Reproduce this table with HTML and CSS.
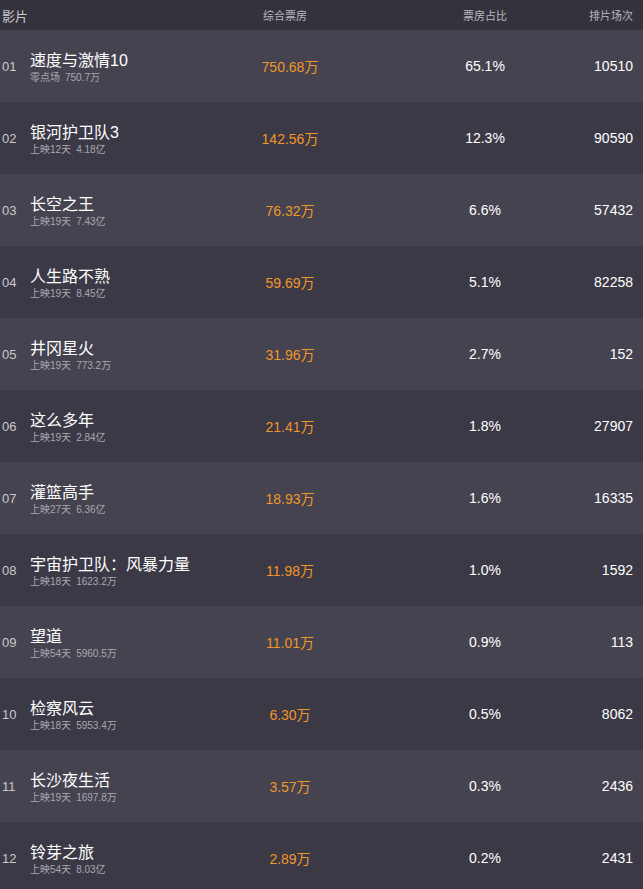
FILE: index.html
```html
<!DOCTYPE html>
<html lang="zh-CN">
<head>
    <meta charset="UTF-8">
    <meta name="viewport" content="width=device-width, initial-scale=1.0">
    <title>实时票房</title>
    <link rel="stylesheet" href="styles.css">
</head>
<body>

    <div class="board">
        <!-- Table header -->
        <div class="row head">
            <div class="rank">影片</div>
            <div></div>
            <div class="box">综合票房</div>
            <div></div>
            <div class="rate">票房占比</div>
            <div class="shows">排片场次</div>
        </div>

        <!-- Movie rows -->
        <div class="row">
            <div class="rank">01</div>
            <div class="movie"><p class="name">速度与激情10</p><p class="info">零点场<span>750.7万</span></p></div>
            <div class="box">750.68万</div><div></div>
            <div class="rate">65.1%</div>
            <div class="shows">10510</div>
        </div>
        <div class="row">
            <div class="rank">02</div>
            <div class="movie"><p class="name">银河护卫队3</p><p class="info">上映12天<span>4.18亿</span></p></div>
            <div class="box">142.56万</div><div></div>
            <div class="rate">12.3%</div>
            <div class="shows">90590</div>
        </div>
        <div class="row">
            <div class="rank">03</div>
            <div class="movie"><p class="name">长空之王</p><p class="info">上映19天<span>7.43亿</span></p></div>
            <div class="box">76.32万</div><div></div>
            <div class="rate">6.6%</div>
            <div class="shows">57432</div>
        </div>
        <div class="row">
            <div class="rank">04</div>
            <div class="movie"><p class="name">人生路不熟</p><p class="info">上映19天<span>8.45亿</span></p></div>
            <div class="box">59.69万</div><div></div>
            <div class="rate">5.1%</div>
            <div class="shows">82258</div>
        </div>
        <div class="row">
            <div class="rank">05</div>
            <div class="movie"><p class="name">井冈星火</p><p class="info">上映19天<span>773.2万</span></p></div>
            <div class="box">31.96万</div><div></div>
            <div class="rate">2.7%</div>
            <div class="shows">152</div>
        </div>
        <div class="row">
            <div class="rank">06</div>
            <div class="movie"><p class="name">这么多年</p><p class="info">上映19天<span>2.84亿</span></p></div>
            <div class="box">21.41万</div><div></div>
            <div class="rate">1.8%</div>
            <div class="shows">27907</div>
        </div>
        <div class="row">
            <div class="rank">07</div>
            <div class="movie"><p class="name">灌篮高手</p><p class="info">上映27天<span>6.36亿</span></p></div>
            <div class="box">18.93万</div><div></div>
            <div class="rate">1.6%</div>
            <div class="shows">16335</div>
        </div>
        <div class="row">
            <div class="rank">08</div>
            <div class="movie"><p class="name">宇宙护卫队：风暴力量</p><p class="info">上映18天<span>1623.2万</span></p></div>
            <div class="box">11.98万</div><div></div>
            <div class="rate">1.0%</div>
            <div class="shows">1592</div>
        </div>
        <div class="row">
            <div class="rank">09</div>
            <div class="movie"><p class="name">望道</p><p class="info">上映54天<span>5960.5万</span></p></div>
            <div class="box">11.01万</div><div></div>
            <div class="rate">0.9%</div>
            <div class="shows">113</div>
        </div>
        <div class="row">
            <div class="rank">10</div>
            <div class="movie"><p class="name">检察风云</p><p class="info">上映18天<span>5953.4万</span></p></div>
            <div class="box">6.30万</div><div></div>
            <div class="rate">0.5%</div>
            <div class="shows">8062</div>
        </div>
        <div class="row">
            <div class="rank">11</div>
            <div class="movie"><p class="name">长沙夜生活</p><p class="info">上映19天<span>1697.8万</span></p></div>
            <div class="box">3.57万</div><div></div>
            <div class="rate">0.3%</div>
            <div class="shows">2436</div>
        </div>
        <div class="row">
            <div class="rank">12</div>
            <div class="movie"><p class="name">铃芽之旅</p><p class="info">上映54天<span>8.03亿</span></p></div>
            <div class="box">2.89万</div><div></div>
            <div class="rate">0.2%</div>
            <div class="shows">2431</div>
        </div>
    </div>

</body>
</html>
```

FILE: styles.css
```css
/* Page */
body {
    margin: 0;
    background-color: #3b3946;
    font-family: "Liberation Sans", "Noto Sans CJK SC", sans-serif;
    color: #ffffff;
    overflow: hidden;
}

/* Every row shares the same column grid */
.row {
    display: grid;
    grid-template-columns: 30px 200px 120px 70px 130px 1fr;
    align-items: center;
    height: 72px;
    padding-right: 10px;
    background-color: #3b3946;
}

.row:nth-child(even) {
    background-color: #45434f;
}

/* Header row */
.row.head {
    height: 30px;
    background-color: #34323d;
    font-size: 11px;
    color: #b9b8c0;
}

.row.head .box {
    padding-right: 10px;
    color: #b9b8c0;
    font-size: 11px;
}

.row.head .rate,
.row.head .shows {
    font-size: 11px;
}

/* Columns */
.rank {
    padding-left: 2px;
    font-size: 13px;
    color: #c9c8cf;
}

.movie {
    padding-top: 4px;
}

.movie p {
    margin: 0;
}

.name {
    font-size: 16px;
    line-height: 20px;
    color: #ffffff;
}

.info {
    font-size: 10px;
    line-height: 14px;
    color: #a9a8b0;
}

.info span {
    margin-left: 5px;
}

.box {
    text-align: center;
    font-size: 14px;
    color: #f0962a;
}

.rate {
    text-align: center;
    font-size: 14px;
}

.shows {
    text-align: right;
    font-size: 14px;
}
```
